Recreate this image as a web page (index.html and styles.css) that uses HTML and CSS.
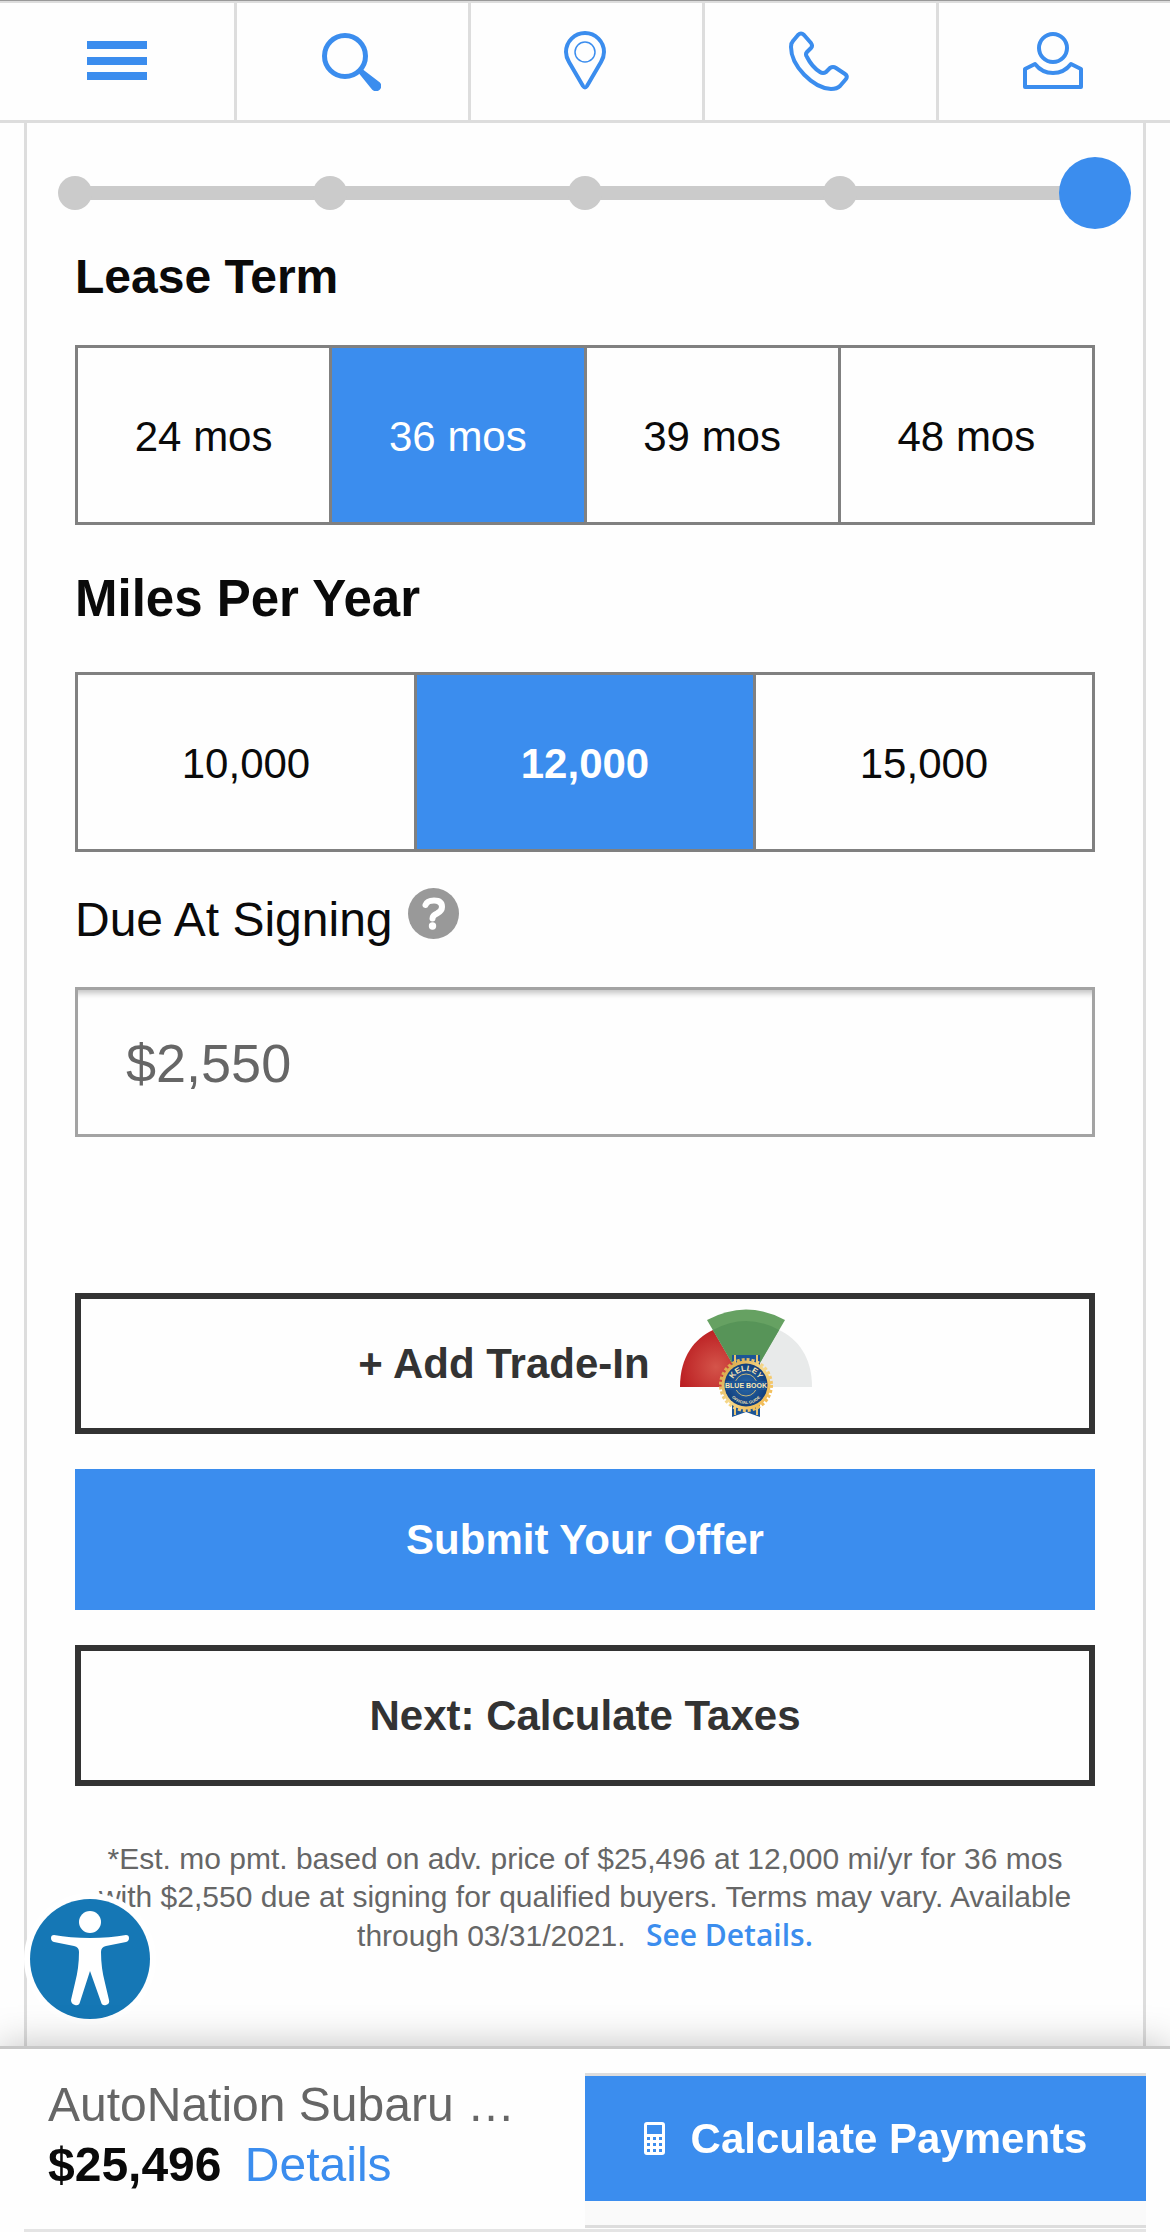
FILE: index.html
```html
<!DOCTYPE html>
<html lang="en">
<head>
    <meta charset="UTF-8">
    <meta name="viewport" content="width=device-width, initial-scale=1.0">
    <title>Lease Payment Calculator</title>
    <link rel="stylesheet" href="styles.css">
</head>
<body>

    <nav class="top-nav">
        <button type="button" aria-label="Menu">
            <svg width="60" height="40" viewBox="0 0 60 40" fill="#3b8dee"><path d="M0 0h60v8H0zM0 16h60v8H0zM0 31h60v8H0z"/></svg>
        </button>
        <a href="#search" aria-label="Search">
            <svg width="60" height="60" viewBox="0 0 60 60" fill="none" stroke="#3b8dee">
                <circle cx="24" cy="25" r="20.500" stroke-width="5"/>
                <path d="M41 39l17 13a4 4 0 0 1-6 6L39 42z" fill="#3b8dee" stroke-width="2" stroke-linejoin="round"/>
            </svg>
        </a>
        <a href="#locations" aria-label="Locations">
            <svg width="60" height="60" viewBox="0 0 60 60" fill="none" stroke="#3b8dee">
                <path d="M28 55L14 31Q11 26 11 21A19 19 0 0 1 49 21Q49 26 46 31L32 55Q30 58 28 55z" stroke-width="4"/>
                <circle cx="30" cy="21" r="10" stroke-width="1.500"/>
            </svg>
        </a>
        <a href="#call" aria-label="Call">
            <svg width="62" height="62" viewBox="0 0 62 62" fill="none" stroke="#3b8dee" stroke-width="4" stroke-linejoin="round">
                <path d="M10 5Q13 2 16 5L23 13Q25 16 23 18L19 22Q17 24 19 27Q24 37 32 42Q35 44 38 42L42 38Q45 36 48 38L57 44Q60 46 58 49L52 56Q49 59 43 59C25 58 3 36 3 17Q3 13 5 11z"/>
            </svg>
        </a>
        <a href="#account" aria-label="Account">
            <svg width="60" height="60" viewBox="0 0 60 60" fill="none" stroke="#3b8dee" stroke-width="4" stroke-linejoin="round">
                <circle cx="30" cy="17" r="14"/>
                <path d="M12 33L2 38V56H58V38L48 33Q41 42 30 42T12 33z"/>
            </svg>
        </a>
    </nav>

    <main class="card">
        <ol class="steps" aria-label="Progress">
            <li><span class="dot"></span></li>
            <li><span class="dot"></span></li>
            <li><span class="dot"></span></li>
            <li><span class="dot"></span></li>
            <li aria-current="step"><span class="dot current"></span></li>
        </ol>

        <form class="lease-form">
            <fieldset>
                <legend>Lease Term</legend>
                <div class="options">
                    <label><input type="radio" name="term" value="24"><span>24 mos</span></label>
                    <label><input type="radio" name="term" value="36" checked><span>36 mos</span></label>
                    <label><input type="radio" name="term" value="39"><span>39 mos</span></label>
                    <label><input type="radio" name="term" value="48"><span>48 mos</span></label>
                </div>
            </fieldset>

            <fieldset class="miles">
                <legend>Miles Per Year</legend>
                <div class="options">
                    <label><input type="radio" name="miles" value="10000"><span>10,000</span></label>
                    <label><input type="radio" name="miles" value="12000" checked><span>12,000</span></label>
                    <label><input type="radio" name="miles" value="15000"><span>15,000</span></label>
                </div>
            </fieldset>

            <div class="field-label">
                <label for="due">Due At Signing</label>
                <button type="button" class="help" aria-label="Help">
                    <svg width="51" height="51" viewBox="0 0 51 51">
                        <circle cx="25.500" cy="25.500" r="25.500" fill="#999"/>
                        <path d="M17.500 17Q19 12.500 26 12.500q8 0 8 6.500 0 4-5 6.500-4.500 2-4.500 5" fill="none" stroke="#fff" stroke-width="6" stroke-linecap="round"/>
                        <circle cx="24.500" cy="38" r="3.700" fill="#fff"/>
                    </svg>
                </button>
            </div>
            <input class="amount" id="due" type="text" value="$2,550">

            <div class="actions">
                <button type="button" class="btn btn-outline">
                    <span>+ Add Trade-In</span>
                    <svg width="132" height="109" viewBox="0 0 132 109">
                        <defs>
                            <radialGradient id="red" gradientUnits="userSpaceOnUse" cx="36" cy="58" r="38">
                                <stop offset="0" stop-color="#d4544a"/>
                                <stop offset="1" stop-color="#bb1f22"/>
                            </radialGradient>
                            <linearGradient id="gold" x1="0" y1="0" x2="1" y2="1">
                                <stop offset="0" stop-color="#d29a35"/>
                                <stop offset=".5" stop-color="#f6d98c"/>
                                <stop offset="1" stop-color="#f0b040"/>
                            </linearGradient>
                            <radialGradient id="navy">
                                <stop offset="0" stop-color="#2a6aab"/>
                                <stop offset="1" stop-color="#123f7c"/>
                            </radialGradient>
                            <path id="arc-top" d="M52 76a14 14 0 0 1 28 0"/>
                            <path id="arc-bottom" d="M47 76a19 19 0 0 0 38 0"/>
                        </defs>
                        <path d="M0 78C0 48 14 30 33 21l33 57z" fill="url(#red)"/>
                        <path d="M132 78c0-30-14-48-33-57L66 78z" fill="#e8eaea"/>
                        <path d="M66 78L27 11Q66-10 105 11z" fill="#66a162"/>
                        <path d="M66 78L33 21Q66 3 99 21z" fill="#579458"/>
                        <path d="M52 46h28v12H52zM52 96h28v12l-14-5-14 5z" fill="#1c5596"/>
                        <path d="M55 46v10M77 46v10M55 97v9M77 97v9" stroke="#e6c373" stroke-width="2"/>
                        <circle cx="66" cy="76" r="25.500" fill="none" stroke="url(#gold)" stroke-width="3" stroke-dasharray="3 2"/>
                        <circle cx="66" cy="76" r="24.500" fill="url(#gold)"/>
                        <circle cx="66" cy="76" r="21.500" fill="url(#navy)"/>
                        <circle cx="66" cy="76" r="11" fill="none" stroke="#c7b77c"/>
                        <path d="M46 72h40v9H46z" fill="#1c5596"/>
                        <g class="seal-text" fill="#f8e6b4" text-anchor="middle">
                            <text font-size="8"><textPath href="#arc-top" startOffset="50%">KELLEY</textPath></text>
                            <text x="66" y="79" font-size="7">BLUE BOOK</text>
                            <text font-size="4"><textPath href="#arc-bottom" startOffset="50%">OFFICIAL GUIDE</textPath></text>
                        </g>
                    </svg>
                </button>
                <button type="submit" class="btn btn-primary">Submit Your Offer</button>
                <button type="button" class="btn btn-outline">Next: Calculate Taxes</button>
            </div>
        </form>

        <p class="disclaimer">*Est. mo pmt. based on adv. price of $25,496 at 12,000 mi/yr for 36 mos with $2,550 due at signing for qualified buyers. Terms may vary. Available through 03/31/2021. <a href="#details">See Details.</a></p>
    </main>

    <button type="button" class="accessibility" aria-label="Accessibility">
        <svg width="120" height="120" viewBox="0 0 120 120">
            <circle cx="60" cy="60" r="60" fill="#1577b5"/>
            <circle cx="60" cy="23" r="11" fill="#fff"/>
            <path d="M24 36q16 3 36 3t36-3q3 0 3 3t-3 4l-20 4q-5 1-5 6 0 16 4 31l4 17q1 4-3 5t-5-3L60 72 50 103q-1 4-5 3t-4-5l4-17q4-15 4-31 0-5-5-6l-20-4q-3-1-3-4t3-3z" fill="#fff"/>
        </svg>
    </button>

    <footer class="bottom-bar">
        <div class="dealer">
            <p class="dealer-name">AutoNation Subaru …</p>
            <p><strong>$25,496</strong> <a href="#price">Details</a></p>
        </div>
        <div class="calculate">
            <button type="button">
                <svg width="21" height="33" viewBox="0 0 21 33" fill-rule="evenodd" fill="#fff">
                    <path d="M3 0h15q3 0 3 3v27q0 3-3 3H3q-3 0-3-3V3q0-3 3-3zM3 3v9h15V3zM3 15v3h3v-3zM9 15v3h3v-3zM15 15v3h3v-3zM3 21v3h3v-3zM9 21v3h3v-3zM15 21v3h3v-3zM3 27v3h3v-3zM9 27v3h3v-3zM15 27v3h3v-3z"/>
                </svg>
                Calculate Payments
            </button>
        </div>
    </footer>

</body>
</html>
```
FILE: styles.css
```css
* {
    box-sizing: border-box;
}

body {
    display: flex;
    flex-direction: column;
    min-height: 100vh;
    margin: 0;
    background-color: #fefefe;
    color: #0a0a0a;
    font-family: "Liberation Sans", Arial, sans-serif;
    font-size: 42px;
}

button {
    border: 0;
    padding: 0;
    background: none;
    font: inherit;
    cursor: pointer;
}

a {
    color: #3b8dee;
    text-decoration: none;
}

svg {
    display: block;
    flex-shrink: 0;
}

.top-nav {
    display: grid;
    grid-template-columns: repeat(5, 1fr);
    height: 123px;
    border-top: 1px solid #999;
    border-bottom: 3px solid #ddd;
    box-shadow: inset 0 2px #ddd;
}

.top-nav > * {
    display: flex;
    align-items: center;
    justify-content: center;
}

.top-nav > * + * {
    padding-right: 3px;
    border-left: 3px solid #ddd;
}

.card {
    flex: 1;
    margin: 0 24px;
    padding: 34px 48px 48px;
    border: solid #ddd;
    border-width: 0 3px;
}

/* progress steps */
.steps {
    display: flex;
    justify-content: space-between;
    align-items: center;
    height: 72px;
    margin: 0 -17px;
    padding: 0;
    list-style: none;
    background: linear-gradient(#cbcbcb, #cbcbcb) center / calc(100% - 34px) 14px no-repeat;
}

.steps li {
    display: flex;
    justify-content: center;
    width: 34px;
}

.dot {
    flex-shrink: 0;
    width: 34px;
    height: 34px;
    border-radius: 50%;
    background-color: #cbcbcb;
}

.dot.current {
    width: 72px;
    height: 72px;
    background-color: #3b8dee;
}

/* form */
fieldset {
    margin: 0;
    padding: 0;
    border: 0;
    min-width: 0;
}

legend {
    padding: 18px 0 38px;
    font-size: 48px;
    line-height: 60px;
    font-weight: bold;
}

.miles legend {
    padding: 44px 0 43px;
    font-size: 51px;
}

.options {
    display: flex;
    height: 180px;
    border: 3px solid #808080;
}

.options label {
    flex: 1;
    display: flex;
    cursor: pointer;
}

.options label + label {
    border-left: 3px solid #808080;
}

.options input {
    position: absolute;
    opacity: 0;
}

.options span {
    flex: 1;
    display: flex;
    align-items: center;
    justify-content: center;
    padding-top: 4px;
}

.options input:checked + span {
    background-color: #3b8dee;
    color: #fff;
}

.miles input:checked + span {
    font-weight: bold;
}

.field-label {
    display: flex;
    align-items: flex-start;
    gap: 15px;
    padding: 36px 0 36px;
    font-size: 48px;
    line-height: 63px;
}

.amount {
    display: block;
    width: 100%;
    height: 150px;
    padding: 2px 48px 0;
    border: 3px solid #a3a3a3;
    border-radius: 0;
    background-color: #fefefe;
    box-shadow: inset 0 9px 6px -6px rgba(0, 0, 0, 0.25);
    color: #666;
    font: inherit;
    font-size: 54px;
}

.actions {
    display: flex;
    flex-direction: column;
    gap: 35px;
    margin-top: 156px;
}

.btn {
    display: flex;
    align-items: center;
    justify-content: center;
    gap: 30px;
    height: 141px;
    font-weight: bold;
}

.btn-outline {
    border: 6px solid #333;
    color: #333;
}

.btn-primary {
    background-color: #3b8dee;
    color: #fff;
}

.disclaimer {
    margin: 54px 0 0;
    padding: 0 21px;
    color: #666;
    font-size: 30px;
    line-height: 38px;
    text-align: center;
}

.disclaimer a {
    margin-left: 12px;
    font-family: "Open Sans", sans-serif;
    font-weight: 600;
}

.accessibility {
    position: fixed;
    left: 30px;
    bottom: 213px;
    border-radius: 50%;
    background-color: #fff;
    box-shadow: 0 0 0 6px #fff;
}

/* sticky price bar */
.bottom-bar {
    position: sticky;
    bottom: 0;
    display: flex;
    height: 186px;
    padding: 24px 24px 0 48px;
    border-top: 3px solid #c8c8c8;
    background: linear-gradient(#e4e4e4, #e4e4e4) center bottom / calc(100% - 48px) 3px no-repeat #fefefe;
    box-shadow: 0 0 36px rgba(0, 0, 0, 0.25);
}

.dealer {
    flex: 1;
    min-width: 0;
    padding-top: 2px;
    font-size: 48px;
    line-height: 60px;
}

.dealer p {
    margin: 0;
}

.dealer .dealer-name {
    color: #666;
    white-space: nowrap;
}

.dealer a {
    margin-left: 10px;
}

.calculate {
    flex: 0 0 calc(50% + 12px);
    height: 155px;
    border-top: 3px solid #ddd;
    border-bottom: 3px solid #ddd;
    background-color: #fafafa;
}

.calculate button {
    display: flex;
    align-items: center;
    justify-content: center;
    gap: 26px;
    width: 100%;
    height: 125px;
    background-color: #3b8dee;
    color: #fff;
    font-weight: bold;
}
```
